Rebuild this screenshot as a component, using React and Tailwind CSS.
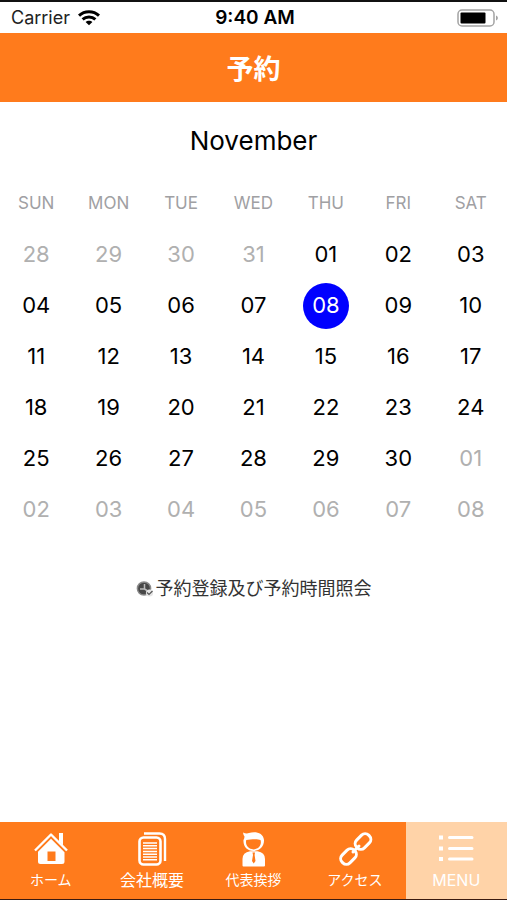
import React, { useState } from "react";

const WEEKDAYS = ["SUN", "MON", "TUE", "WED", "THU", "FRI", "SAT"];

const WEEKS = [
  ["28", "29", "30", "31", "01", "02", "03"],
  ["04", "05", "06", "07", "08", "09", "10"],
  ["11", "12", "13", "14", "15", "16", "17"],
  ["18", "19", "20", "21", "22", "23", "24"],
  ["25", "26", "27", "28", "29", "30", "01"],
  ["02", "03", "04", "05", "06", "07", "08"],
];

// cells outside this range belong to the previous or next month
const FIRST_INDEX = 4;
const LAST_INDEX = 33;

function WifiIcon() {
  return (
    <svg width="22" height="16" viewBox="0 0 22 16" aria-hidden="true">
      <g fill="none" stroke="#000" strokeWidth="3">
        <path d="M1 5.6C6.6 0.4 15.4 0.4 21 5.6" />
        <path d="M4.6 9.4C8.2 6.1 13.8 6.1 17.4 9.4" />
      </g>
      <path d="M7.6 11.9C9.4 10.2 12.6 10.2 14.4 11.9L11 15.3Z" />
    </svg>
  );
}

function BatteryIcon() {
  return (
    <svg width="42" height="18" viewBox="0 0 42 18" aria-hidden="true">
      <rect x="1" y="1" width="36" height="16" rx="4" fill="#fff" stroke="#a3a3a3" strokeWidth="1.5" />
      <rect x="3.5" y="3.5" width="25" height="11" rx="1" />
      <path d="M39 6.5C41.5 7.5 41.5 10.5 39 11.5Z" fill="#a3a3a3" />
    </svg>
  );
}

function HomeIcon() {
  return (
    <svg width="36" height="36" viewBox="0 0 36 36" fill="#fff" aria-hidden="true">
      <path d="M26 1H30V13.5L26 9.5Z" />
      <path d="M2 18.5L18 2.5L34 18.5" fill="none" stroke="#fff" strokeWidth="2.4" strokeLinejoin="round" />
      <path d="M18 6.7L31.5 20.2V29.5Q31.5 32 29 32H7.5Q5 32 5 29.5V19.7ZM14.5 19.5V29H22.5V19.5Z" fillRule="evenodd" />
    </svg>
  );
}

function DocumentIcon() {
  return (
    <svg width="36" height="36" viewBox="0 0 36 36" fill="none" stroke="#fff" aria-hidden="true">
      <path d="M10 1.5H25.5Q31 1.5 31 7V29" strokeWidth="2.4" />
      <rect x="5.5" y="5.5" width="21" height="27" rx="4" strokeWidth="2.6" />
      <path d="M9 11H23M9 13.8H23M9 16.6H23M9 19.4H23M9 22.2H23M9 25H23M9 27.8H23" strokeWidth="1.5" />
    </svg>
  );
}

function PersonIcon() {
  return (
    <svg width="36" height="36" viewBox="0 0 36 36" fill="#fff" aria-hidden="true">
      <path
        d="M8 0.5Q11.5 2 14 1C20 -1 28.5 0.5 29 8C29.3 14 25 19 18.5 19C12 19 8 14.5 8.5 8Q9.5 6 9.5 4.5Q8.3 3 8 0.5ZM11.3 8C10 12.5 13 17.4 18.5 17.4C24 17.4 27 12.5 25.5 8C22 6.5 15 7.5 11.3 8Z"
        fillRule="evenodd"
      />
      <path
        d="M15 19.3Q7.5 20.5 7.5 27V33.5Q7.5 34.5 8.5 34.5H29Q30 34.5 30 33.5V27Q30 20.5 22.5 19.3ZM17.5 20.5H20L19.6 23L20.5 29L18.7 31.5L17 29L18 23Z"
        fillRule="evenodd"
      />
    </svg>
  );
}

function LinkIcon() {
  return (
    <svg width="36" height="36" viewBox="0 0 36 36" fill="none" stroke="#fff" strokeWidth="3" aria-hidden="true">
      <rect x="-8.5" y="-5.5" width="17" height="11" rx="5" transform="translate(26 9.5) rotate(-45)" />
      <rect x="-8.5" y="-5.5" width="17" height="11" rx="5" transform="translate(11.5 24.5) rotate(-45)" />
      <path d="M16 20L22 14" strokeLinecap="round" />
    </svg>
  );
}

function MenuIcon() {
  return (
    <svg width="36" height="36" viewBox="0 0 36 36" fill="#fff" aria-hidden="true">
      <path d="M1 3.5H5V7.5H1ZM1 14.5H5V18.5H1ZM1 25H5V29H1Z" />
      <path d="M11.5 5.5H34M11.5 16.5H34M11.5 27H34" stroke="#fff" strokeWidth="3" strokeLinecap="round" />
    </svg>
  );
}

function ClockIcon() {
  return (
    <svg width="18" height="18" viewBox="0 0 18 18" aria-hidden="true">
      <circle cx="8" cy="8.5" r="6.6" fill="#484848" stroke="#8a8a8a" strokeWidth="1.5" />
      <path d="M8.5 4V9H4M8.5 9L11 10.5" fill="none" stroke="#bbb" strokeWidth="1.5" />
      <circle cx="13.5" cy="13" r="3.6" fill="#e5e5e5" />
      <path d="M11 12.5L13 14.5L16.5 11" fill="none" stroke="#555" strokeWidth="1.2" />
    </svg>
  );
}

const TABS = [
  { label: "ホーム", Icon: HomeIcon, size: "text-sm" },
  { label: "会社概要", Icon: DocumentIcon, size: "text-base" },
  { label: "代表挨拶", Icon: PersonIcon, size: "text-sm" },
  { label: "アクセス", Icon: LinkIcon, size: "text-sm" },
  { label: "MENU", Icon: MenuIcon, size: "text-base", active: true },
];

export default function App() {
  const [selected, setSelected] = useState(11);

  const dayClass = (index) => {
    if (index === selected) return "bg-[#0000ff] text-white";
    if (index < FIRST_INDEX || index > LAST_INDEX) return "text-[#b0b0b0]";
    return "text-black";
  };

  return (
    <div className="flex min-h-screen flex-col border-t-2 border-b border-t-[#111] border-b-[#3a1a10] bg-white font-['Inter','Noto_Sans_CJK_JP',sans-serif]">
      <div className="grid h-[31px] grid-cols-3 items-center pr-2 pl-[11px] text-lg text-black">
        <div className="flex items-center gap-2 text-[#222]">
          <span>Carrier</span>
          <WifiIcon />
        </div>
        <span className="text-center text-[19px] font-semibold">9:40 AM</span>
        <div className="flex justify-end">
          <BatteryIcon />
        </div>
      </div>

      <header className="flex h-[69px] items-center justify-center bg-[#ff7b1c] pt-1">
        <h1 className="text-[27px] leading-10 font-bold text-white">予約</h1>
      </header>

      <main className="flex flex-1 flex-col">
        <h2 className="pt-[21px] pb-5 text-center text-[26px] leading-9 text-black">November</h2>

        <table className="w-full table-fixed border-collapse text-center">
          <thead>
            <tr className="h-[50px]">
              {WEEKDAYS.map((day) => (
                <th key={day} scope="col" className="p-0 text-center text-[17px] font-normal text-[#a0a0a3]">
                  {day}
                </th>
              ))}
            </tr>
          </thead>
          <tbody>
            {WEEKS.map((week, row) => (
              <tr key={row} className="h-[51px]">
                {week.map((day, col) => {
                  const index = row * 7 + col;
                  return (
                    <td key={col} className="p-0">
                      <button
                        type="button"
                        aria-pressed={index === selected}
                        onClick={() => setSelected(index)}
                        className={`mx-auto flex size-[46px] items-center justify-center rounded-full text-[22px] ${dayClass(index)}`}
                      >
                        {day}
                      </button>
                    </td>
                  );
                })}
              </tr>
            ))}
          </tbody>
        </table>

        <a href="#reserve" className="mx-auto mt-10 flex items-center gap-[2px] text-lg leading-7 text-[#333]">
          <ClockIcon />
          予約登録及び予約時間照会
        </a>
      </main>

      <nav className="grid grid-cols-5">
        {TABS.map(({ label, Icon, size, active }) => (
          <a
            key={label}
            href="#tab"
            className={`flex h-[77px] flex-col items-center pt-[10px] text-white ${
              active ? "bg-[#ffd3a8]" : "bg-[#ff7b1c]"
            }`}
          >
            <Icon />
            <span className={`${size} leading-6`}>{label}</span>
          </a>
        ))}
      </nav>
    </div>
  );
}
